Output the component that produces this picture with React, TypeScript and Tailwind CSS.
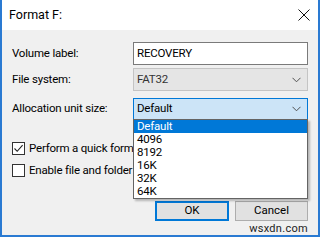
import React from 'react';

const FONT = "font-['Segoe_UI','Roboto','Liberation_Sans',sans-serif]";

function Chevron({ className = '' }: { className?: string }) {
  return (
    <svg width="9" height="6" viewBox="0 0 9 6" className={className}>
      <path d="M0.5 0.8 L4.5 4.8 L8.5 0.8" fill="none" stroke="#505050" strokeWidth="1" />
    </svg>
  );
}

function Row({
  label,
  className = '',
  children,
}: {
  label: string;
  className?: string;
  children: React.ReactNode;
}) {
  return (
    <div className={`flex items-center ${className}`}>
      <div className="w-[131px] shrink-0 pl-[10px]">{label}</div>
      {children}
    </div>
  );
}

function Check({ checked, label, className = '' }: { checked: boolean; label: string; className?: string }) {
  return (
    <div className={`flex items-center pl-[10px] ${className}`}>
      <div className="flex h-[13px] w-[13px] shrink-0 items-center justify-center border border-[#333] bg-white">
        {checked && (
          <svg width="11" height="11" viewBox="0 0 11 11">
            <path d="M1.5 5.5 L4.2 8.3 L9.6 2.2" fill="none" stroke="#222" strokeWidth="1.1" />
          </svg>
        )}
      </div>
      <span className="ml-[4px] whitespace-nowrap">{label}</span>
    </div>
  );
}

export default function App() {
  const sizes = ['Default', '4096', '8192', '16K', '32K', '64K'];
  return (
    <div
      className={`relative flex h-[237px] w-[320px] flex-col overflow-hidden border-x-2 border-b-2 border-[#2a7ad2] bg-[#f0f0f0] text-[11.5px] leading-none tracking-[-0.2px] text-black ${FONT}`}
    >
      <div className="flex h-[30px] shrink-0 items-center justify-between bg-white pl-[7px] pr-[8px] tracking-normal">
        <span className="text-[12.5px]">Format F:</span>
        <svg width="12" height="12" viewBox="0 0 12 12">
          <path d="M0.5 0.5 L11.5 11.5 M11.5 0.5 L0.5 11.5" stroke="#111" strokeWidth="1" />
        </svg>
      </div>

      <Row label="Volume label:" className="mt-[12px]">
        <div className="flex h-[23px] w-[175px] items-center border border-[#7a7a7a] bg-white pl-[3px]">
          RECOVERY
        </div>
      </Row>

      <Row label="File system:" className="mt-[3px]">
        <div className="flex h-[23px] w-[175px] items-center justify-between border border-[#c4c4c4] bg-[#e5e5e5] pl-[3px] pr-[6px] text-[#333]">
          <span>FAT32</span>
          <Chevron />
        </div>
      </Row>

      {/* combo is open: the list drops over the checkbox labels */}
      <Row label="Allocation unit size:" className="mt-[7px]">
        <div className="relative">
          <div className="flex h-[22px] w-[175px] items-center justify-between border border-[#0078d7] bg-[#cce4f7] pl-[3px] pr-[6px]">
            <span>Default</span>
            <Chevron />
          </div>
          <div className="absolute left-0 top-[21px] z-10 w-[175px] border border-[#646464] bg-white shadow-[2px_2px_2px_rgba(0,0,0,0.25)]">
            {sizes.map((s, i) => (
              <div
                key={s}
                className={`flex h-[13px] items-center pl-[3px] ${i === 0 ? 'bg-[#0078d7] text-white' : ''}`}
              >
                {s}
              </div>
            ))}
          </div>
        </div>
      </Row>

      <Check checked label="Perform a quick format" className="mt-[22px]" />
      <Check checked={false} label="Enable file and folder compression" className="mt-[9px]" />

      <div className="mt-[24px] flex justify-end gap-[6px] pr-[10px] tracking-normal">
        <button className="h-[20px] w-[74px] border-2 border-[#0078d7] bg-[#e1e1e1]">OK</button>
        <button className="h-[20px] w-[73px] border border-[#adadad] bg-[#e1e1e1]">Cancel</button>
      </div>

      <div className="absolute bottom-[1px] right-[10px] text-[11px] tracking-[0.3px] text-[#222]">
        wsxdn.com
      </div>
    </div>
  );
}
